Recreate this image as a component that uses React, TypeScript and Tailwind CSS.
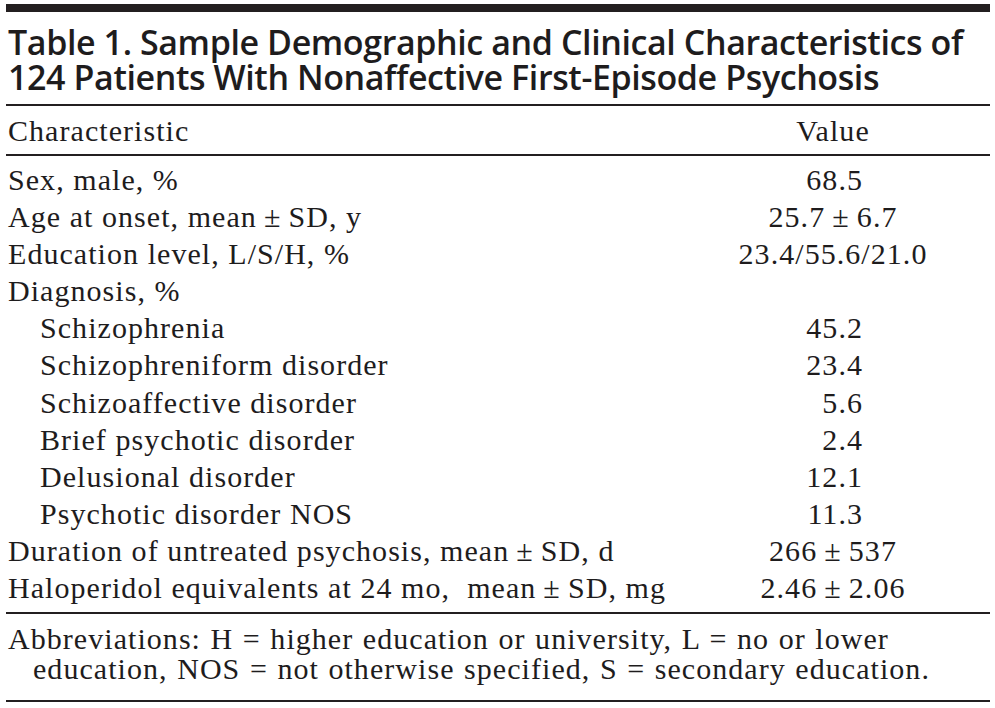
import React from "react";

type Row = { label: string; value?: string; indent?: boolean; num?: boolean };

const rows: Row[] = [
  { label: "Sex, male, %", value: "68.5", num: true },
  { label: "Age at onset, mean\u2009±\u2009SD, y", value: "25.7\u2009±\u20096.7" },
  { label: "Education level, L/S/H, %", value: "23.4/55.6/21.0" },
  { label: "Diagnosis, %" },
  { label: "Schizophrenia", value: "45.2", indent: true, num: true },
  { label: "Schizophreniform disorder", value: "23.4", indent: true, num: true },
  { label: "Schizoaffective disorder", value: "5.6", indent: true, num: true },
  { label: "Brief psychotic disorder", value: "2.4", indent: true, num: true },
  { label: "Delusional disorder", value: "12.1", indent: true, num: true },
  { label: "Psychotic disorder NOS", value: "11.3", indent: true, num: true },
  { label: "Duration of untreated psychosis, mean\u2009±\u2009SD, d", value: "266\u2009±\u2009537" },
  { label: "Haloperidol equivalents at 24 mo,  mean\u2009±\u2009SD, mg", value: "2.46\u2009±\u20092.06" },
];

export default function App() {
  return (
    <div className="w-[995px] h-[708px] bg-white pl-[6px] pr-[5px] pt-[4px] text-[#1e1c1d] overflow-hidden">
      <div className="h-[8px] bg-[#231f20]" />

      <h1 className="pl-[2px] pt-[13px] pb-[9px] font-['Open_Sans',sans-serif] font-semibold text-[34px] leading-[35px] tracking-[-0.4px] whitespace-nowrap">
        Table 1. Sample Demographic and Clinical Characteristics of
        <br />
        124 Patients With Nonaffective First-Episode Psychosis
      </h1>
      <div className="h-[2px] bg-[#231f20]" />

      <div className="font-['Liberation_Serif',serif] text-[30px] tracking-[1.05px]">
        <div className="grid grid-cols-[1fr_300px] pl-[2px] pr-[7px] h-[48px] items-center">
          <span>Characteristic</span>
          <span className="text-center">Value</span>
        </div>
        <div className="h-[2px] bg-[#231f20]" />

        <div className="pt-[5px] pb-[6px]">
          {rows.map((r) => (
            <div key={r.label} className="grid grid-cols-[1fr_300px] pl-[2px] pr-[7px] h-[37.1px] leading-[37.1px]">
              <span className={r.indent ? "pl-[32px] whitespace-pre" : "whitespace-pre"}>{r.label}</span>
              <span className="flex justify-center">
                {r.value && (r.num ? <span className="w-[60px] text-right">{r.value}</span> : <span>{r.value}</span>)}
              </span>
            </div>
          ))}
        </div>
        <div className="h-[2px] bg-[#231f20]" />

        <p className="pl-[2px] pt-[10px] pb-[16px] leading-[30px] whitespace-nowrap [word-spacing:1px]">
          Abbreviations: H = higher education or university, L = no or lower
          <br />
          <span className="pl-[25px]">
            education, NOS = not otherwise specified, S = secondary education.
          </span>
        </p>
        <div className="h-[2px] bg-[#231f20]" />
      </div>
    </div>
  );
}
